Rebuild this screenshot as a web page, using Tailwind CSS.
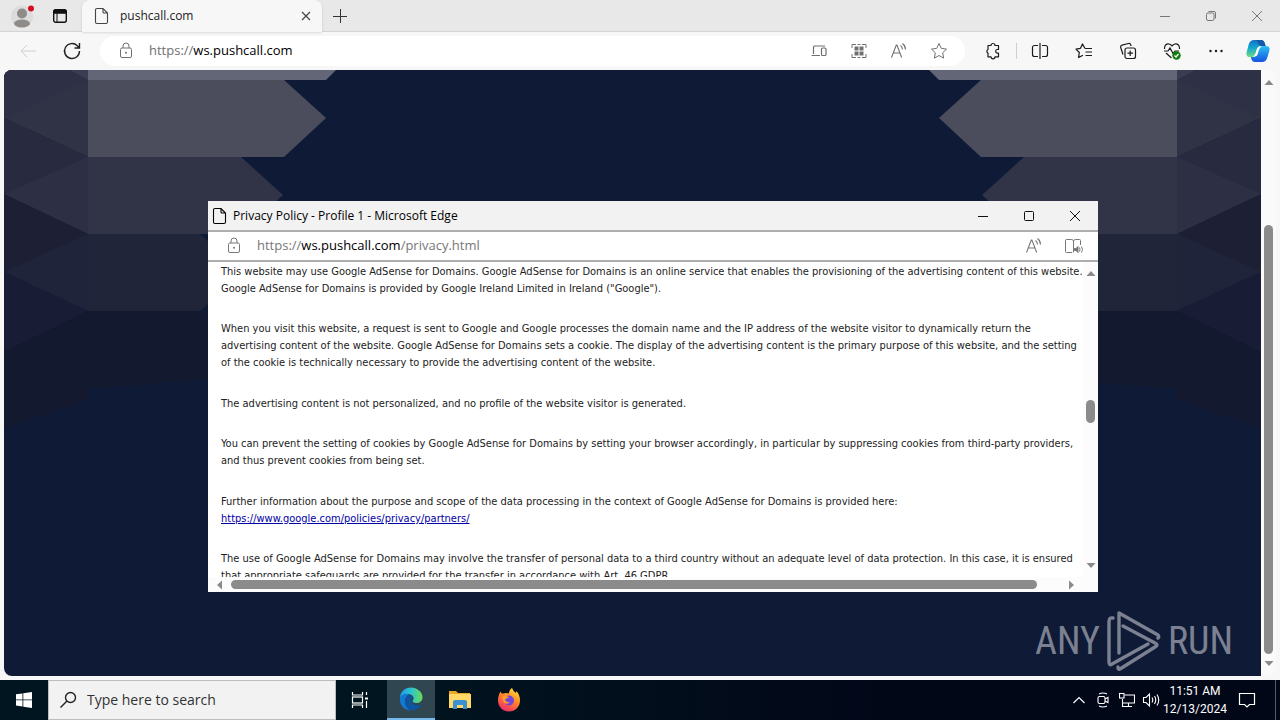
<!DOCTYPE html>
<html lang="en">
<head>
<meta charset="utf-8">
<title>pushcall.com</title>
<script src="https://cdn.jsdelivr.net/npm/@tailwindcss/browser@4"></script>
</head>
<body class="relative flex h-screen flex-col overflow-hidden bg-[#f7f7f7] font-['Open_Sans','Noto_Sans',sans-serif] text-[#222]">

<svg class="hidden">
  <symbol id="page" viewBox="0 0 16 18"><path d="M3 1.500h6l4.500 4.500v9a1.500 1.500 0 0 1-1.500 1.500H3A1.500 1.500 0 0 1 1.500 15V3A1.500 1.500 0 0 1 3 1.500zM9 1.500V5a1 1 0 0 0 1 1h3.500" fill="none" stroke="currentColor" stroke-width="1.100"/></symbol>
  <symbol id="lock" viewBox="0 0 14 18"><rect x="1.500" y="6" width="11" height="9.500" rx="1.500" fill="none" stroke="currentColor"/><path d="M4 6V4a3 3 0 0 1 6 0v2" fill="none" stroke="currentColor"/><circle cx="7" cy="10.700" r="1" fill="currentColor"/></symbol>
  <symbol id="aloud" viewBox="0 0 18 18"><path d="M1.500 15.500 6.300 3h.6l4.800 12.500M3.200 11h6.800M10.500 3.500q2 1.500 2 4M12.500 1.500q3 2.300 3 6" fill="none" stroke="currentColor" stroke-width="1.100"/></symbol>
  <symbol id="art" viewBox="0 0 340 606">
    <path d="M0 0h84v330L0 358z" fill="#15192f"/>
    <path d="M84 241h112l12 10v58l-124 10-84 41V282z" fill="#13192f"/>
    <path d="M0 0h84v87L0 48z" fill="#303346"/>
    <path d="M0 0h68l16 10L0 48z" fill="#2e3145"/>
    <path d="M66 0h18v10z" fill="#3a3d51"/>
    <path d="M0 48l84 39v77L0 124z" fill="#282b40"/>
    <path d="M84 87v77L0 124z" fill="#2d3044"/>
    <path d="M0 124l84 40v77L0 202z" fill="#1d2035"/>
    <path d="M84 164v77L0 202z" fill="#20243a"/>
    <path d="M0 202l84 39L0 282z" fill="#181c34"/>
    <path d="M84 0h248l-10 10H84z" fill="#636676"/>
    <path d="M84 10h196l42 38-42 39H84z" fill="#4b4d5d"/>
    <path d="M84 87h153l42 38-42 39H84z" fill="#313347"/>
    <path d="M84 164h112l42 38-42 39H84z" fill="#212539"/>
  </symbol>
</svg>

<header>
  <div class="flex h-8 items-center border-b border-[#d4d4d4] bg-[#e8e8e8]">
    <button aria-label="Profile" class="ml-2 flex w-7 justify-center"><svg class="size-7" viewBox="0 0 28 28"><circle cx="14" cy="14.500" r="11" fill="#dcdcdc"/><circle cx="14" cy="11.500" r="5" fill="#8e8b89"/><ellipse cx="14" cy="21.500" rx="8" ry="4" fill="#8e8b89"/><circle cx="23" cy="6.500" r="3" fill="#d5101e"/></svg></button>
    <button aria-label="Tab actions" class="ml-2 flex w-8 justify-center"><svg class="size-4" viewBox="0 0 16 16"><rect x="1.700" y="1.700" width="12.600" height="12.600" rx="2" fill="none" stroke="#111" stroke-width="1.400"/><path d="M2 2h12v3.200H2zM5 5v9" stroke="#111" fill="#111"/></svg></button>
    <div class="ml-1.5 flex h-8 w-60 items-center rounded-t-lg bg-[#f7f7f7] pl-3 pr-2 shadow-sm">
      <svg class="h-[18px] w-4 text-[#444]"><use href="#page"/></svg>
      <span class="ml-2.5 flex-1 text-xs">pushcall.com</span>
      <button aria-label="Close tab" class="flex size-4 items-center justify-center"><svg class="size-2.5" viewBox="0 0 10 10"><path d="M1 1l8 8M9 1l-8 8" stroke="#444" stroke-width="1.200"/></svg></button>
    </div>
    <button aria-label="New tab" class="ml-2 flex size-5 items-center justify-center"><svg class="size-4" viewBox="0 0 16 16"><path d="M8.500 1v14M1 8.500h14" stroke="#333"/></svg></button>
    <div class="ml-auto flex text-[#777]">
      <button aria-label="Minimize" class="flex w-[46px] justify-center"><svg class="size-3" viewBox="0 0 12 12"><path d="M1 6.500h10" stroke="currentColor"/></svg></button>
      <button aria-label="Restore" class="flex w-[46px] justify-center"><svg class="size-3" viewBox="0 0 12 12" fill="none" stroke="currentColor"><rect x="1.500" y="3" width="7.500" height="7.500" rx="1.500"/><path d="M3.500 1.500H9A1.500 1.500 0 0 1 10.500 3v5.500"/></svg></button>
      <button aria-label="Close" class="flex w-[46px] justify-center"><svg class="size-3" viewBox="0 0 12 12"><path d="M1 1l10 10M11 1L1 11" stroke="currentColor"/></svg></button>
    </div>
  </div>
  <div class="flex h-[38px] items-center">
    <button aria-label="Back" class="ml-2 flex w-10 justify-center"><svg class="size-5" viewBox="0 0 20 20" fill="none" stroke="#cfcfcf"><path d="M18 10H3M9 4l-6 6 6 6"/></svg></button>
    <button aria-label="Refresh" class="ml-1 flex w-10 justify-center"><svg class="size-5" viewBox="0 0 20 20" fill="none" stroke="#222" stroke-width="1.400"><path d="M17.500 10a7.500 7.500 0 1 1-2.200-5.300L17.500 7M17.500 2v5h-5"/></svg></button>
    <div class="ml-2 flex h-[30px] flex-1 items-center rounded-full bg-white pl-[19px] pr-1.5 text-[#707070]">
      <svg class="h-[18px] w-3.5"><use href="#lock"/></svg>
      <div class="ml-4 flex-1 text-[13px]">https://<span class="text-black">ws.pushcall.com</span></div>
      <button aria-label="Devices" class="flex w-10 justify-center"><svg class="size-4" viewBox="0 0 16 16" fill="none" stroke="currentColor" stroke-width="1.200"><path d="M2.500 11V4a1 1 0 0 1 1-1H14M.5 12.500H9"/><rect x="10.500" y="5" width="4.500" height="7.500" rx="1"/></svg></button>
      <button aria-label="QR code" class="flex w-10 justify-center"><svg class="size-4" viewBox="0 0 16 16" fill="currentColor"><path d="M3.500 3.500h4v4h-4zM8.500 3.500h4v4h-4zM3.500 8.500h4v4h-4zM8.500 8.500h4v4h-4z"/><path d="M1 5V1.500h4M11 1.500h4V5M15 11v3.500h-4M5 14.500H1V11M6.500 1.500h3M6.500 14.500h3" fill="none" stroke="currentColor"/></svg></button>
      <button aria-label="Read aloud" class="flex w-10 justify-center"><svg class="size-[18px]"><use href="#aloud"/></svg></button>
      <button aria-label="Favorite" class="flex w-10 justify-center"><svg class="size-[18px]" viewBox="0 0 18 18" fill="none" stroke="currentColor" stroke-linejoin="round"><path d="M9 1.500l2.300 4.900 5.200.7-3.800 3.700.9 5.300L9 13.500l-4.600 2.600.9-5.300L1.500 7.100l5.200-.7z"/></svg></button>
    </div>
    <div class="ml-1.5 flex items-center pr-0.5 text-[#1b1b1b]">
      <button aria-label="Extensions" class="flex w-11 justify-center"><svg class="size-[18px]" viewBox="0 0 18 18" fill="none" stroke="currentColor" stroke-width="1.200" stroke-linejoin="round"><path d="M4 3.500h3a2 2 0 0 1 4 0h3.500v4h-1a1.800 1.800 0 0 0 0 3.600h1v3.700H11a2 2 0 0 1-4 0H4v-3.700a2 2 0 0 1 0-3.600z"/></svg></button>
      <span class="mx-px h-4 w-px bg-[#cfcfcf]"></span>
      <button aria-label="Split screen" class="flex w-11 justify-center"><svg class="size-[18px]" viewBox="0 0 18 18" fill="none" stroke="currentColor" stroke-width="1.200"><path d="M9 1v16M7 3.500H3.500a2 2 0 0 0-2 2v7a2 2 0 0 0 2 2H7M11 3.500h3.500a2 2 0 0 1 2 2v7a2 2 0 0 1-2 2H11"/></svg></button>
      <button aria-label="Favorites" class="flex w-11 justify-center"><svg class="size-[18px]" viewBox="0 0 18 18" fill="none" stroke="currentColor" stroke-width="1.200" stroke-linejoin="round"><path d="M10 6.500 7.500 2 5.300 6.400 1 7.100l3.300 3.400-.7 5L8 13.200M10 6.500h7M10.500 10H17M10.500 13.500H17"/></svg></button>
      <button aria-label="Collections" class="flex w-11 justify-center"><svg class="size-[18px]" viewBox="0 0 18 18" fill="none" stroke="currentColor" stroke-width="1.200"><rect x="6" y="6" width="10.500" height="10.500" rx="2"/><path d="M11.200 8.500v5.500M8.500 11.200H14M4 12.500 1.700 5.500A1.800 1.800 0 0 1 3 3.200l6.500-1.700a1.800 1.800 0 0 1 2.200 1.200l.5 1.300"/></svg></button>
      <button aria-label="Browser essentials" class="flex w-11 justify-center"><svg class="size-[18px]" viewBox="0 0 18 18" fill="none" stroke="currentColor" stroke-width="1.200"><path d="M1.500 7C1 3 4 1.500 6 2q2 .5 3 2 1-1.500 3-2c2-.5 5 1 4.500 5M1 9h4l2-3 3 5.500L12 9h4M3 11l5.500 5"/><circle cx="13.500" cy="13.500" r="4.200" fill="#107c10" stroke="none"/><path d="M11.500 13.500l1.500 1.500 2.500-3" stroke="#fff"/></svg></button>
      <button aria-label="Settings and more" class="flex w-11 justify-center"><svg class="size-4" viewBox="0 0 16 16" fill="currentColor"><circle cx="2.500" cy="8" r="1.200"/><circle cx="8" cy="8" r="1.200"/><circle cx="13.500" cy="8" r="1.200"/></svg></button>
      <button aria-label="Copilot" class="flex w-10 justify-center"><svg class="size-6" viewBox="0 0 24 24"><defs><linearGradient id="cpa" x2="0" y2="1"><stop stop-color="#1570c8"/><stop offset=".45" stop-color="#10a5d0"/><stop offset="1" stop-color="#6edc82"/></linearGradient><linearGradient id="cpb" x2="0" y2="1"><stop stop-color="#2cc0f4"/><stop offset="1" stop-color="#1553e0"/></linearGradient></defs><path d="M8 1h7q3 0 4 4l.5 2H15q-3 0-4 4l-1.500 5q-.8 2-3.500 2H4q-4.500 0-3.300-5l2-7.500Q4 1 8 1z" fill="url(#cpa)"/><path d="M16 23H9q-3 0-4-4l-.3-1H7q3 0 4-4l1.500-5q.8-2 3.500-2h4q4.500 0 3.300 5l-2 6.500Q20 23 16 23z" fill="url(#cpb)"/><path d="M10 1h5q3 0 4 4l.6 2H15.500q-2.500 0-3-2z" fill="#1559a8"/><path d="M13 7.500h3q-2.500 1-3.300 4l-1 3.500q-.8 2.500-3 2.500H7q2-1 2.800-4l1-3.500q.6-2 2.200-2.500z" fill="#fff"/></svg></button>
    </div>
  </div>
</header>

<main class="mx-1 mb-1 flex min-h-0 flex-1 overflow-hidden rounded-lg bg-[#fafafa]">
  <div class="relative flex flex-1 justify-between bg-[#0f1b36]">
    <svg class="h-[606px] w-[340px]"><use href="#art"/></svg>
    <svg class="h-[606px] w-[340px] -scale-x-100"><use href="#art"/></svg>
    <div class="absolute right-7 bottom-1 flex items-center gap-1.5 font-['Liberation_Sans_Narrow','Roboto_Condensed','Liberation_Sans',sans-serif] text-[38px] leading-none text-[#7c8192]">
      <span>ANY</span>
      <svg class="h-[62px] w-14" viewBox="0 0 56 62" fill="none" stroke="#7c8192" stroke-width="3.400" stroke-linejoin="round" stroke-linecap="round"><path d="M13 43V3l39 22q1.500 2 0 3M7 8Q3 7 3 12v40q0 4 3 2l36-20M17 16l32 17q4 2 0 4L14 59q-2 1-2-2"/></svg>
      <span>RUN</span>
    </div>
  </div>
  <div class="flex w-[15px] flex-col items-center justify-between py-[9px]">
    <svg class="h-[7px] w-2.5" viewBox="0 0 10 7"><path d="M5 1l4.500 5h-9z" fill="#8a8a8a"/></svg>
    <div class="mt-auto mb-1.5 h-[429px] w-[9px] rounded-full bg-[#8b8b8b]"></div>
    <svg class="h-[7px] w-2.5" viewBox="0 0 10 7"><path d="M5 6L.5 1h9z" fill="#8a8a8a"/></svg>
  </div>
</main>

<section aria-label="Privacy Policy" class="absolute top-[201px] left-[208px] flex h-[391px] w-[890px] flex-col bg-white">
  <div class="flex h-[31px] shrink-0 items-center border-b-2 border-[#adadad] bg-[#f2f2f2] pl-1 text-black">
    <svg class="h-[18px] w-4"><use href="#page"/></svg>
    <h1 class="ml-[5px] flex-1 text-xs">Privacy Policy - Profile 1 - Microsoft Edge</h1>
    <button aria-label="Minimize window" class="flex w-[46px] justify-center"><svg class="size-3" viewBox="0 0 12 12"><path d="M1 6.500h10" stroke="#111"/></svg></button>
    <button aria-label="Maximize window" class="flex w-[46px] justify-center"><svg class="size-3" viewBox="0 0 12 12"><rect x="1.500" y="1.500" width="9" height="9" rx="1" fill="none" stroke="#111"/></svg></button>
    <button aria-label="Close window" class="flex w-[46px] justify-center"><svg class="size-3" viewBox="0 0 12 12"><path d="M1 1l10 10M11 1L1 11" stroke="#111"/></svg></button>
  </div>
  <div class="flex h-[30px] shrink-0 items-center border-b-2 border-[#adadad] pl-[19px] pr-3.5 text-[#777]">
    <svg class="h-[18px] w-3.5"><use href="#lock"/></svg>
    <div class="ml-4 flex-1 text-[13px]">https://<span class="text-black">ws.pushcall.com</span>/privacy.html</div>
    <button aria-label="Read page aloud"><svg class="size-[18px]"><use href="#aloud"/></svg></button>
    <button aria-label="Immersive reader" class="ml-[21px]"><svg class="size-5" viewBox="0 0 20 20" fill="none" stroke="currentColor"><path d="M8 16.500H2.500a1 1 0 0 1-1-1v-11a1 1 0 0 1 1-1h5a2 2 0 0 1 2 1.500v11.500M9.500 5a2 2 0 0 1 2-1.500h4a1 1 0 0 1 1 1V9"/><path d="M10.500 12.500h1.500l2-2v6l-2-2h-1.500z" fill="currentColor"/><path d="M15.500 11.500q1 2 0 4M17.500 10.500q2 3 0 6"/></svg></button>
  </div>
  <div class="flex min-h-0 flex-1">
    <div class="flex-1 overflow-hidden whitespace-nowrap pt-px pl-[13px] font-['DejaVu_Sans_Condensed','DejaVu_Sans',sans-serif] text-[11px] leading-[17px]">
      <p class="mb-[23px]">This website may use Google AdSense for Domains. Google AdSense for Domains is an online service that enables the provisioning of the advertising content of this website.<br>Google AdSense for Domains is provided by Google Ireland Limited in Ireland ("Google").</p>
      <p class="mb-6">When you visit this website, a request is sent to Google and Google processes the domain name and the IP address of the website visitor to dynamically return the<br>advertising content of the website. Google AdSense for Domains sets a cookie. The display of the advertising content is the primary purpose of this website, and the setting<br>of the cookie is technically necessary to provide the advertising content of the website.</p>
      <p class="mb-[23px]">The advertising content is not personalized, and no profile of the website visitor is generated.</p>
      <p class="mb-6">You can prevent the setting of cookies by Google AdSense for Domains by setting your browser accordingly, in particular by suppressing cookies from third-party providers,<br>and thus prevent cookies from being set.</p>
      <p class="mb-[23px]">Further information about the purpose and scope of the data processing in the context of Google AdSense for Domains is provided here:<br><a href="#" class="text-[#0000a8] underline">https://www.google.com/policies/privacy/partners/</a></p>
      <p>The use of Google AdSense for Domains may involve the transfer of personal data to a third country without an adequate level of data protection. In this case, it is ensured<br>that appropriate safeguards are provided for the transfer in accordance with Art. 46 GDPR.</p>
    </div>
    <div class="flex w-[15px] flex-col items-center bg-[#fcfcfc] py-2">
      <svg class="h-[7px] w-2.5" viewBox="0 0 10 7"><path d="M5 1l4.500 5h-9z" fill="#8a8a8a"/></svg>
      <div class="mt-[123px] h-[23px] w-[9px] rounded-full bg-[#8b8b8b]"></div>
      <svg class="mt-auto h-[7px] w-2.5" viewBox="0 0 10 7"><path d="M5 6L.5 1h9z" fill="#8a8a8a"/></svg>
    </div>
  </div>
  <div class="flex h-[15px] shrink-0 items-center bg-[#fcfcfc] pl-2 pr-[23px]">
    <svg class="h-2.5 w-[7px]" viewBox="0 0 7 10"><path d="M1 5l5-4.500v9z" fill="#8a8a8a"/></svg>
    <div class="ml-2 h-[9px] w-[806px] rounded-full bg-[#8b8b8b]"></div>
    <svg class="ml-auto h-2.5 w-[7px]" viewBox="0 0 7 10"><path d="M6 5L1 .5v9z" fill="#8a8a8a"/></svg>
  </div>
</section>

<footer class="flex h-10 shrink-0 items-center bg-linear-to-r from-[#00151f] from-30% to-[#020718] to-70% text-white">
  <button aria-label="Start" class="flex h-full w-12 items-center justify-center"><svg class="size-4" viewBox="0 0 16 16" fill="#fff"><path d="M0 2.300l6.500-.9v6.100H0zM7.300 1.300L16 0v7.500H7.300zM0 8.300h6.500v6.200L0 13.600zM7.300 8.300H16V16l-8.700-1.300z"/></svg></button>
  <label class="flex h-full w-72 items-center border border-[#bdbdbd] bg-[#f2f2f2] pl-2.5">
    <svg class="size-[18px]" viewBox="0 0 18 18" fill="none" stroke="#222" stroke-width="1.400"><circle cx="11.500" cy="6.500" r="5"/><path d="M8 10l-6.500 6.500"/></svg>
    <input type="text" aria-label="Search" placeholder="Type here to search" class="ml-2.5 min-w-0 flex-1 bg-transparent text-sm outline-none placeholder:text-[#333]">
  </label>
  <button aria-label="Task view" class="flex w-[51px] justify-center pr-1"><svg class="size-[18px]" viewBox="0 0 18 18" fill="none" stroke="#fff" stroke-width="1.200"><path d="M1.500 1v3h10V1M1.500 17v-3h10v3M15.500 1v3M15.500 10v7"/><rect x="1.500" y="6" width="10" height="6"/><path d="M14 6.500h3v2h-3z" fill="#fff" stroke="none"/></svg></button>
  <button aria-label="Microsoft Edge" class="flex h-full w-12 items-center justify-center border-b-2 border-[#76b9ed] bg-[#304650]"><svg class="size-6" viewBox="0 0 24 24"><defs><linearGradient id="eg" x2="1"><stop stop-color="#199fe3"/><stop offset=".5" stop-color="#2cc3cf"/><stop offset="1" stop-color="#6bdc55"/></linearGradient></defs><path d="M1 11C1 5 6 .5 12 .5S23.500 5 23.500 10c0 4-3 6-6 6-2 0-4-.6-4-1.500s1.500-1.500 1-4C14 8 11 7 8.500 7 5 7 2 9 1 11z" fill="url(#eg)"/><path d="M1 11c2-4 6-5 9-3.500-3 1.500-4 4-4 7 0 4 3 8 6 9C6 23.500 0 18.500 1 11z" fill="#1279d4"/><path d="M10 8c2.500.5 4.300 1.500 4.500 2.500-1-.5-2.500 1-2.500 3 0 4 5 6 10.500 3.800C20 22 16 23.500 12.500 23.500 8 22 5.500 18 6 14c.3-3 2-5 4-6z" fill="#0d559f"/></svg></button>
  <button aria-label="File Explorer" class="flex w-[49px] justify-center"><svg class="size-6" viewBox="0 0 24 24"><path d="M1 3h7l2 2h12v15H1z" fill="#e9a825"/><path d="M1 6h22v14H1z" fill="#ffd867"/><path d="M5 21v-7q0-2 2-2h10q2 0 2 2v7h-4v-4H9v4z" fill="#3c8fd0"/></svg></button>
  <button aria-label="Firefox" class="flex w-[49px] justify-center"><svg class="size-6" viewBox="0 0 24 24"><defs><linearGradient id="ff" x1=".8" x2=".3" y2="1"><stop stop-color="#ffe23f"/><stop offset=".45" stop-color="#ff8a24"/><stop offset="1" stop-color="#f0286d"/></linearGradient></defs><path d="M3.500 3.500Q4 6 6 5.500q3-1 6 0Q12 2 15 0q1 3 4 5l.5-2q3.500 4 3.500 9.500C23 19 18 23.500 12 23.500S1 19 1 12.500c0-4 1-6 2.500-9z" fill="url(#ff)"/><circle cx="12" cy="12.500" r="5" fill="#7146d8"/><path d="M5 9q3-2 7 0-2 2-4 2 1 4 5 3-2 3-6 1z" fill="#ff9b28"/></svg></button>
  <div class="ml-auto flex items-center">
    <button aria-label="Show hidden icons" class="flex w-6 justify-center"><svg class="size-3" viewBox="0 0 12 12" fill="none" stroke="#fff" stroke-width="1.200"><path d="M.5 9L6 3.500 11.500 9"/></svg></button>
    <button aria-label="Meet now" class="flex w-6 justify-center"><svg class="size-4" viewBox="0 0 16 16" fill="none" stroke="#fff" stroke-width="1.100"><rect x="3" y="4.500" width="7" height="7" rx="1.500"/><path d="M10 7l3-1.500v5L10 9M4 2q4-2 8 0M4 14q4 2 8 0"/></svg></button>
    <button aria-label="Network" class="flex w-6 justify-center"><svg class="size-4" viewBox="0 0 16 16" fill="none" stroke="#fff" stroke-width="1.100"><path d="M5.500 3h10v8h-12V7M9.500 11v3.500M6 14.500h7M3.500 7v7.500H6"/><rect x=".5" y="1.500" width="4.500" height="4.500"/></svg></button>
    <button aria-label="Volume" class="flex w-6 justify-center"><svg class="size-[18px]" viewBox="0 0 18 18" fill="none" stroke="#fff" stroke-width="1.100"><path d="M1.500 6.500H4L7.500 3v12L4 11.500H1.500zM10 6.500q1.500 2.500 0 5M12.500 5q2.500 4 0 8M15 3.500q3.500 5.500 0 11"/></svg></button>
    <time class="w-16 text-center font-['Roboto','Open_Sans',sans-serif] text-xs leading-[18px] whitespace-nowrap">11:51 AM<br>12/13/2024</time>
    <button aria-label="Notifications" class="flex w-10 justify-center"><svg class="size-[18px]" viewBox="0 0 18 18" fill="none" stroke="#fff" stroke-width="1.200"><path d="M1.500 2.500h15v11H11.500L9 16l-2.500-2.500h-5z"/></svg></button>
    <span class="ml-2 h-10 w-[5px] border-l border-[#555b68]"></span>
  </div>
</footer>
</body>
</html>
